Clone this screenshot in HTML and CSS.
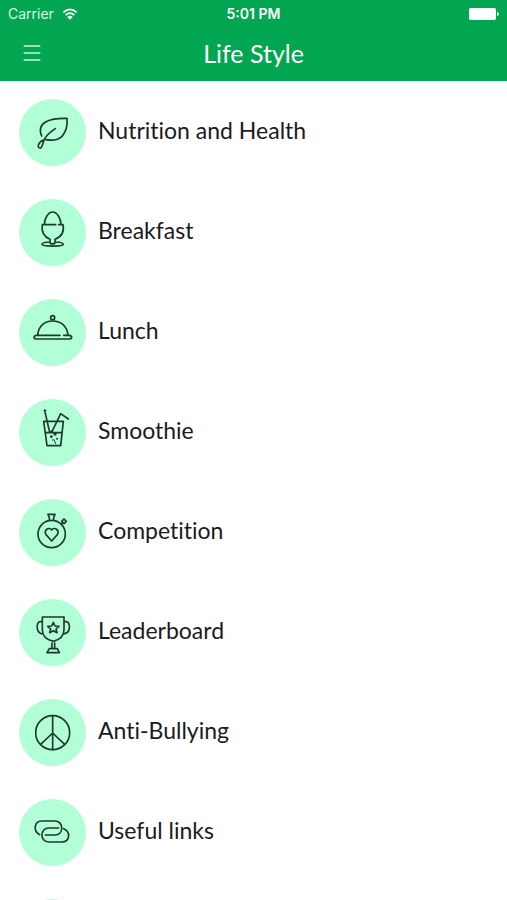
FILE: index.html
```html
<!DOCTYPE html>
<html lang="en">
<head>
<meta charset="utf-8">
<meta name="viewport" content="width=device-width, initial-scale=1">
<title>Life Style</title>
<link rel="stylesheet" href="styles.css">
</head>
<body>
<header class="header">
  <div class="status">
    <span class="carrier">Carrier
      <svg class="wifi" viewBox="0 0 48 36" aria-hidden="true"><path d="M4 13Q24 -5 44 13M11 21Q24 10 37 21"/><path class="solid" d="M16 27Q24 20 32 27L24 35Z"/></svg>
    </span>
    <span class="time">5:01 PM</span>
    <svg class="battery" viewBox="0 0 90 36" aria-hidden="true"><rect width="81" height="36" rx="5"/><path d="M84 12Q90 13 90 18T84 24Z"/></svg>
  </div>
  <div class="bar">
    <button class="menu" type="button" aria-label="Menu"><svg viewBox="0 0 54 54" aria-hidden="true"><path d="M2 6H52M2 27H52M2 48H52"/></svg></button>
    <h1 class="title">Life Style</h1>
  </div>
</header>
<main class="content">
  <ul class="list">
    <li><a class="row" href="#nutrition"><svg class="icon" viewBox="28 26 201 201" aria-hidden="true"><path d="M96 137Q84 108 109 94Q130 83 172 84Q175 118 157 138Q139 155 106 147M137 115Q111 132 103 149Q96 175 91 173Q83 172 87 162Q92 151 103 149"/></svg><span>Nutrition and Health</span></a></li>
    <li><a class="row" href="#breakfast"><svg class="icon" viewBox="28 26 201 201" aria-hidden="true"><path d="M104 103C104 84 116 65 129 65S154 84 154 103M138 103H98C94 127 104 140 121 147V154M147 103H160C165 127 154 140 136 147V154M121 155Q97 156 97 162C97 169 161 169 161 162Q161 156 136 155"/><path d="M121 158Q129 164 136 158"/></svg><span>Breakfast</span></a></li>
    <li><a class="row" href="#lunch"><svg class="icon" viewBox="28 26 201 201" aria-hidden="true"><circle cx="129" cy="82" r="6"/><path d="M84 135C86 109 103 92 129 92S173 109 175 135M151 135H79Q73 136 73 141T80 146H179Q186 146 186 141T179 135H162"/></svg><span>Lunch</span></a></li>
    <li><a class="row" href="#smoothie"><svg class="icon" viewBox="28 26 201 201" aria-hidden="true"><path d="M102 93H161L153 166H112ZM107 127H157M105 60L120 126M126 126L153 70L176 86M104 61L108 60M119 127L126 122"/><path class="thin" d="M133 148L138 160"/><circle class="dot" cx="125" cy="139" r="4"/><circle class="dot" cx="136" cy="131" r="5"/><circle class="dot" cx="142" cy="145" r="3"/><circle class="dot" cx="129" cy="149" r="2"/></svg><span>Smoothie</span></a></li>
    <li><a class="row" href="#competition"><svg class="icon" viewBox="28 26 201 201" aria-hidden="true"><circle cx="126" cy="131" r="41"/><path d="M119 89V82L115 72H136L132 82V89M126 152L109 133C101 119 118 108 126 119C134 108 151 119 143 133ZM155 101L159 97"/><path d="M163 86L170 93L163 100L156 93Z"/></svg><span>Competition</span></a></li>
    <li><a class="row" href="#leaderboard"><svg class="icon" viewBox="28 26 201 201" aria-hidden="true"><path d="M98 80H163V118C163 139 149 148 131 153C111 148 98 139 98 118ZM98 94H92C78 94 78 130 100 131M163 94H169C184 94 184 130 161 131M127 158V174M135 158V174M119 175H143L149 187H112Z"/><path d="M131 96L136 107L148 108L139 116L142 127L131 121L120 127L123 116L114 108L126 107Z"/></svg><span>Leaderboard</span></a></li>
    <li><a class="row" href="#anti-bullying"><svg class="icon" viewBox="28 26 201 201" aria-hidden="true"><circle cx="129" cy="127" r="51"/><path d="M129 76V178M129 128L93 162M129 128L165 162"/></svg><span>Anti-Bullying</span></a></li>
    <li><a class="row" href="#links"><svg class="icon" viewBox="28 26 201 201" aria-hidden="true"><path d="M90 133C69 122 74 92 96 92H136C162 92 164 133 136 134H107M147 113H117C90 113 90 155 117 155H157C181 155 184 124 162 115"/></svg><span>Useful links</span></a></li>
    <li><a class="row" href="#more" aria-label="More"><svg class="icon" viewBox="28 26 201 201" aria-hidden="true"></svg></a></li>
  </ul>
</main>
</body>
</html>
```
FILE: styles.css
```css
* { box-sizing: border-box; }
body {
  margin: 0;
  height: 100vh;
  display: flex;
  flex-direction: column;
  background: #fff;
  color: #1b1a22;
  font-family: Lato, "Open Sans", sans-serif;
  font-variant-ligatures: none;
}
.header {
  flex: none;
  background: #02a650;
  color: #fff;
}
.status {
  display: grid;
  grid-template-columns: 1fr auto 1fr;
  align-items: center;
  height: 28px;
  padding: 0 8px;
  font: 14px/28px Inter, sans-serif;
}
.carrier {
  display: flex;
  align-items: center;
  gap: 8px;
  color: #d8f8e5;
}
.time { font-weight: 600; }
.wifi {
  width: 16px;
  height: 12px;
  fill: none;
  stroke: #fff;
  stroke-width: 5;
}
.wifi .solid { fill: #fff; stroke: none; }
.battery {
  width: 30px;
  height: 12px;
  justify-self: end;
  fill: #fff;
}
.bar {
  display: grid;
  grid-template-columns: 48px 1fr 48px;
  align-items: center;
  height: 53px;
  padding: 0 8px 4px;
}
.menu {
  display: flex;
  justify-content: center;
  padding: 12px 0;
  border: 0;
  background: none;
}
.menu svg {
  width: 18px;
  height: 18px;
  fill: none;
  stroke: #c4f7d9;
  stroke-width: 5;
}
.title {
  margin: 0;
  font-size: 25px;
  line-height: 32px;
  font-weight: 400;
  text-align: center;
}
.content {
  flex: 1;
  min-height: 0;
  overflow-y: auto;
  scrollbar-width: none;
}
.list {
  margin: 0;
  padding: 0;
  list-style: none;
}
.row {
  display: flex;
  align-items: center;
  gap: 12px;
  height: 100px;
  padding: 2px 19px 0;
  color: inherit;
  font-size: 23px;
  line-height: 28px;
  font-weight: 400;
  text-decoration: none;
}
.row span { padding-bottom: 4px; }
.icon {
  flex: none;
  width: 67px;
  height: 67px;
  border-radius: 50%;
  background: #b2ffd7;
  fill: none;
  stroke: #1d3a2b;
  stroke-width: 5;
  stroke-linecap: round;
  stroke-linejoin: round;
}
.icon .thin { stroke-width: 3; }
.icon .dot { fill: #1d3a2b; stroke: none; }
```
